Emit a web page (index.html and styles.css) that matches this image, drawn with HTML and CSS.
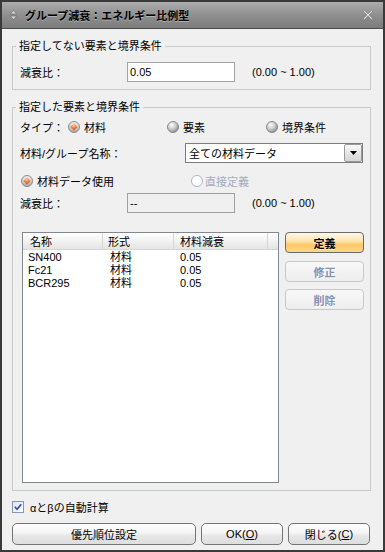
FILE: index.html
```html
<!DOCTYPE html>
<html lang="ja">
<head>
<meta charset="utf-8">
<title>グループ減衰：エネルギー比例型</title>
<link rel="stylesheet" href="styles.css">
</head>
<body>
<svg class="defs" width="0" height="0" aria-hidden="true">
  <defs>
    <linearGradient id="ringGrey" x1="0" y1="0" x2="0" y2="1">
      <stop offset="0" stop-color="#f4f4f4"/>
      <stop offset="1" stop-color="#a8a8a8"/>
    </linearGradient>
    <radialGradient id="ballGrey" cx="0.38" cy="0.32" r="0.7">
      <stop offset="0" stop-color="#ffffff"/>
      <stop offset="0.55" stop-color="#c8c8c8"/>
      <stop offset="1" stop-color="#8c8c8c"/>
    </radialGradient>
    <radialGradient id="dotOrange" cx="0.45" cy="0.3" r="0.7">
      <stop offset="0" stop-color="#ffd0a0"/>
      <stop offset="0.5" stop-color="#ff7a30"/>
      <stop offset="1" stop-color="#d84010"/>
    </radialGradient>
    <linearGradient id="checkBg" x1="0" y1="0" x2="1" y2="1">
      <stop offset="0" stop-color="#dfe3ec"/>
      <stop offset="1" stop-color="#ffffff"/>
    </linearGradient>
  </defs>
</svg>
<div class="window">
  <div class="titlebar">
    <svg class="title-icon" width="7" height="10" viewBox="0 0 7 10">
      <path d="M3.5 0.5 L6.5 4 L0.5 4 Z" fill="#d8d8d8" stroke="#6a6a6a" stroke-width="0.6"/>
      <path d="M3.5 9.5 L6.5 6 L0.5 6 Z" fill="#d8d8d8" stroke="#6a6a6a" stroke-width="0.6"/>
    </svg>
    <span class="title">グループ減衰：エネルギー比例型</span>
    <svg class="close-icon" width="10" height="10" viewBox="0 0 10 10">
      <path d="M1 1 L9 9 M9 1 L1 9" stroke="#6e6e6e" stroke-width="2.4"/>
      <path d="M1 1 L9 9 M9 1 L1 9" stroke="#dcdcdc" stroke-width="1.2"/>
    </svg>
  </div>

  <div class="content">
    <fieldset class="group group-free">
      <legend>指定してない要素と境界条件</legend>
      <div class="row">
        <span class="label label-ratio">減衰比：</span>
        <div class="field">0.05</div>
        <span class="range">(0.00 ~ 1.00)</span>
      </div>
    </fieldset>

    <fieldset class="group group-spec">
      <legend>指定した要素と境界条件</legend>
      <div class="row row-type">
        <span class="label label-type">タイプ：</span>
        <span class="radio-item">
          <svg class="radio" width="12" height="12" viewBox="0 0 12 12">
            <circle cx="6" cy="6" r="5.5" fill="url(#ringGrey)" stroke="#8a8a8a"/>
            <path d="M6 2.6 L9.4 6 L6 9.4 L2.6 6 Z" fill="url(#dotOrange)"/>
          </svg>材料</span>
        <span class="radio-item">
          <svg class="radio" width="12" height="12" viewBox="0 0 12 12">
            <circle cx="6" cy="6" r="5.5" fill="url(#ballGrey)" stroke="#8a8a8a"/>
          </svg>要素</span>
        <span class="radio-item">
          <svg class="radio" width="12" height="12" viewBox="0 0 12 12">
            <circle cx="6" cy="6" r="5.5" fill="url(#ballGrey)" stroke="#8a8a8a"/>
          </svg>境界条件</span>
      </div>

      <div class="row row-name">
        <span class="label label-name">材料/グループ名称：</span>
        <div class="select">
          <span class="select-text">全ての材料データ</span>
          <span class="select-btn">
            <svg width="7" height="4" viewBox="0 0 7 4"><path d="M0 0 H7 L3.5 4 Z" fill="#000"/></svg>
          </span>
        </div>
      </div>

      <div class="row row-source">
        <span class="radio-item source-item">
          <svg class="radio" width="12" height="12" viewBox="0 0 12 12">
            <circle cx="6" cy="6" r="5.5" fill="url(#ringGrey)" stroke="#8a8a8a"/>
            <path d="M6 2.6 L9.4 6 L6 9.4 L2.6 6 Z" fill="url(#dotOrange)"/>
          </svg>材料データ使用</span>
        <span class="radio-item radio-disabled">
          <svg class="radio" width="12" height="12" viewBox="0 0 12 12">
            <circle cx="6" cy="6" r="5.5" fill="#ffffff" stroke="#aab6cc"/>
          </svg>直接定義</span>
      </div>

      <div class="row row-ratio2">
        <span class="label label-ratio">減衰比：</span>
        <div class="field field-disabled">--</div>
        <span class="range">(0.00 ~ 1.00)</span>
      </div>

      <div class="list-area">
        <div class="list">
          <div class="list-head">
            <span class="hc hc1">名称</span>
            <span class="hc hc2">形式</span>
            <span class="hc hc3">材料減衰</span>
            <span class="hc hc4"></span>
          </div>
          <div class="list-body">
            <div class="list-row"><span class="lc1">SN400</span><span class="lc2">材料</span><span class="lc3">0.05</span></div>
            <div class="list-row"><span class="lc1">Fc21</span><span class="lc2">材料</span><span class="lc3">0.05</span></div>
            <div class="list-row"><span class="lc1">BCR295</span><span class="lc2">材料</span><span class="lc3">0.05</span></div>
          </div>
        </div>
        <div class="side-buttons">
          <button class="btn btn-side btn-primary">定義</button>
          <button class="btn btn-side btn-disabled">修正</button>
          <button class="btn btn-side btn-disabled">削除</button>
        </div>
      </div>
    </fieldset>

    <div class="check-row">
      <svg class="checkbox" width="12" height="12" viewBox="0 0 12 12">
        <rect x="0.5" y="0.5" width="11" height="11" fill="url(#checkBg)" stroke="#8795b4"/>
        <path d="M2.8 5.8 L5 8.3 L9.3 3.2" fill="none" stroke="#2f4fb8" stroke-width="1.7"/>
      </svg>
      <span class="check-text">αとβの自動計算</span>
    </div>

    <div class="bottom-buttons">
      <button class="btn btn-wide">優先順位設定</button>
      <button class="btn btn-ok">OK(<u>O</u>)</button>
      <button class="btn btn-close">閉じる(<u>C</u>)</button>
    </div>
  </div>
</div>
</body>
</html>
```

FILE: styles.css
```css
* { box-sizing: border-box; }

html, body {
  margin: 0;
  padding: 0;
}

body {
  width: 385px;
  height: 552px;
  background: #f0f0f0;
  font-family: "Liberation Sans", "Noto Sans CJK JP", sans-serif;
  font-size: 11px;
  color: #000;
}

.defs {
  display: block;
  width: 0;
  height: 0;
  overflow: hidden;
}

.window {
  width: 385px;
  height: 552px;
  border: 2px solid #3a3a3a;
  background: #f0f0f0;
  display: flex;
  flex-direction: column;
}

/* title bar */
.titlebar {
  flex: none;
  height: 27px;
  display: flex;
  align-items: center;
  padding: 0 10px 0 8px;
  background: linear-gradient(#adadad, #8f8f8f 50%, #7c7c7c);
  border-bottom: 1px solid #4c4c4c;
}

.title-icon {
  flex: none;
  display: block;
}

.title {
  flex: 1;
  margin-left: 8px;
  font-weight: bold;
  font-size: 11px;
  color: #000;
  text-shadow: 0 1px 0 rgba(255, 255, 255, 0.35);
  white-space: nowrap;
}

.close-icon {
  flex: none;
  display: block;
}

/* content */
.content {
  flex: 1;
  display: flex;
  flex-direction: column;
  padding: 0 12px 0 10px;
}

.group {
  margin: 10px 0 0;
  border: 1px solid #c9c9c9;
  min-width: 0;
}

.group legend {
  padding: 0 3px;
  margin-left: -4px;
  line-height: 14px;
  font-size: 11px;
}

.group-free {
  padding: 9px 7px 7px 7px;
}

.group-spec {
  padding: 3px 5px 7px 7px;
}

.row {
  display: flex;
  align-items: center;
  height: 20px;
  white-space: nowrap;
}

.label {
  flex: none;
}

.label-ratio { width: 107px; }
.label-type { width: 48px; }
.label-name { width: 165px; }

.field {
  flex: none;
  width: 108px;
  height: 20px;
  border: 1px solid #a3a3a3;
  background: #fff;
  padding-left: 2px;
  display: flex;
  align-items: center;
}

.field-disabled {
  background: #f0f0f0;
  border-color: #a0a0a0;
}

.range {
  margin-left: 17px;
}

/* radios */
.radio-item {
  display: flex;
  align-items: center;
  width: 99px;
  flex: none;
}

.radio {
  display: block;
  flex: none;
  margin-right: 4px;
}

.row-name { margin-top: 6px; }

.row-source { margin-top: 8px; }

.source-item {
  width: 170px;
  margin-left: 1px;
}

.radio-disabled {
  color: #a4adbf;
}

.radio-disabled .radio {
  margin-right: 2px;
}

.row-ratio2 { margin-top: 2px; }

/* select */
.select {
  flex: none;
  width: 178px;
  height: 20px;
  border: 1px solid #7c7c7c;
  background: #fff;
  display: flex;
  align-items: center;
  padding-left: 3px;
}

.select-text {
  flex: 1;
}

.select-btn {
  flex: none;
  width: 18px;
  height: 18px;
  border: 1px solid #9a9a9a;
  border-radius: 2px;
  background: linear-gradient(#fafafa, #e4e4e4 55%, #d6d6d6);
  display: flex;
  align-items: center;
  justify-content: center;
}

.select-btn svg { display: block; }

/* list */
.list-area {
  display: flex;
  margin-top: 19px;
  margin-left: 2px;
}

.list {
  flex: none;
  width: 257px;
  height: 251px;
  border: 1px solid #838790;
  background: #fff;
}

.list-head {
  display: flex;
  height: 17px;
  background: linear-gradient(#ffffff, #f2f2f2 50%, #e4e4e4);
  border-bottom: 1px solid #d5d5d5;
}

.hc {
  display: flex;
  align-items: center;
  border-right: 1px solid #d5d5d5;
  white-space: nowrap;
}

.hc1 { width: 80px; padding-left: 7px; }
.hc2 { width: 71px; padding-left: 5px; }
.hc3 { width: 94px; padding-left: 6px; }
.hc4 { flex: 1; border-right: none; }

.list-body {
  padding-top: 1px;
}

.list-row {
  display: grid;
  grid-template-columns: 80px 71px 94px;
  height: 13px;
  line-height: 13px;
  white-space: nowrap;
}

.lc1 { padding-left: 5px; }
.lc2 { padding-left: 7px; }
.lc3 { padding-left: 6px; }

/* buttons */
.btn {
  font-family: "Liberation Sans", "Noto Sans CJK JP", sans-serif;
  font-size: 11px;
  color: #000;
  padding: 0;
  border: 1px solid #8a8a8a;
  border-radius: 4px;
  background: linear-gradient(#ffffff, #f4f4f4 45%, #e6e6e6 60%, #dedede);
  display: flex;
  align-items: center;
  justify-content: center;
}

.side-buttons {
  flex: none;
  display: flex;
  flex-direction: column;
  gap: 7px;
  width: 79px;
  margin-left: 6px;
}

.btn-side {
  height: 21px;
  font-weight: bold;
}

.btn-primary {
  margin-bottom: 1px;
  border-color: #6a6a6a;
  background: linear-gradient(#fff8ea, #ffe6b4 40%, #ffc866 62%, #ffd68a);
  text-shadow: 0 1px 0 rgba(255, 255, 255, 0.6);
}

.btn-disabled {
  border-color: #c8c8c8;
  color: #8192b5;
  text-shadow: 1px 1px 0 #fff;
  background: linear-gradient(#f8f8f8, #ededed);
}

/* checkbox */
.check-row {
  display: flex;
  align-items: center;
  height: 14px;
  margin-top: 9px;
}

.checkbox {
  display: block;
  flex: none;
}

.check-text {
  margin-left: 6px;
}

/* bottom buttons */
.bottom-buttons {
  display: flex;
  gap: 5px;
  margin-top: 9px;
  height: 22px;
}

.bottom-buttons .btn {
  height: 22px;
  border-color: #747474;
  border-radius: 5px;
}

.btn-wide { width: 184px; }
.btn-ok { width: 82px; }
.btn-close { width: 82px; }
```
